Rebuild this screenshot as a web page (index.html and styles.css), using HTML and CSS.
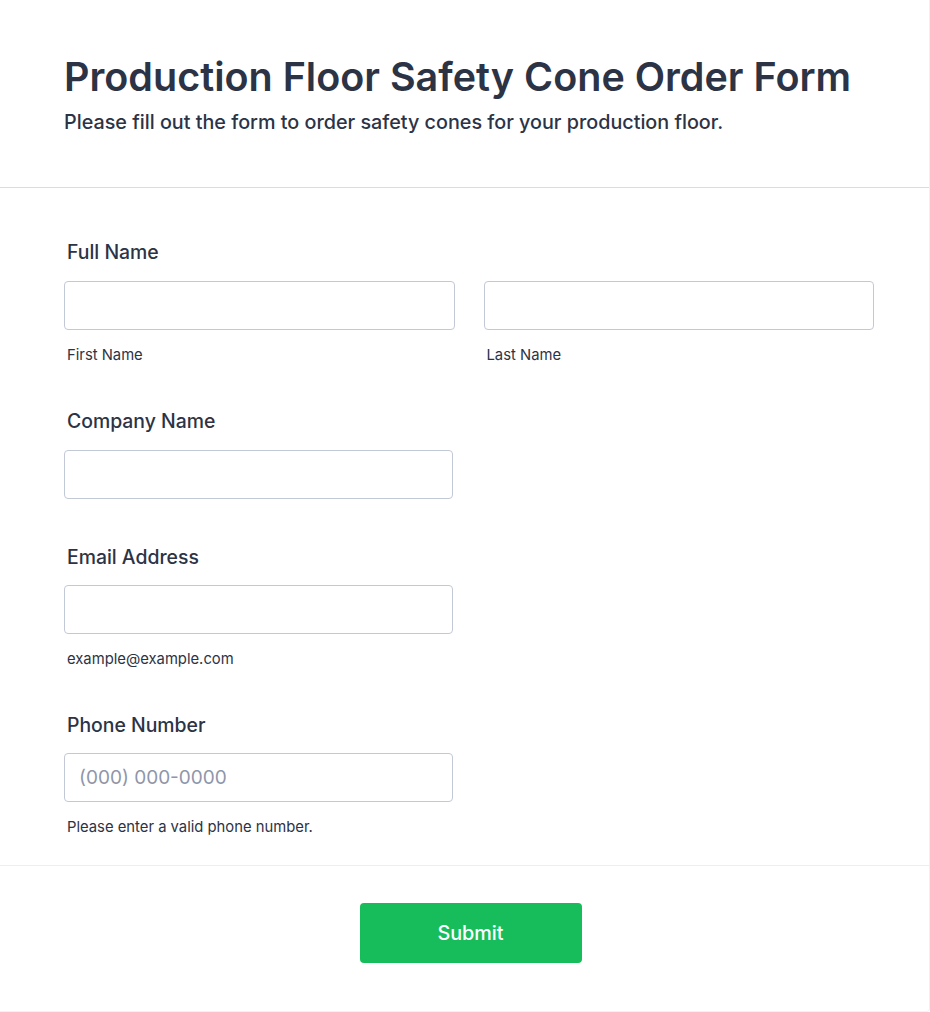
FILE: index.html
```html
<!DOCTYPE html>
<html lang="en">
<head>
<meta charset="utf-8">
<title>Production Floor Safety Cone Order Form</title>
<link rel="stylesheet" href="styles.css">
</head>
<body>
<div class="card">
  <header class="header">
    <h1 class="title">Production Floor Safety Cone Order Form</h1>
    <p class="subtitle">Please fill out the form to order safety cones for your production floor.</p>
  </header>
  <form class="body">
    <div class="field field-first">
      <label class="label">Full Name</label>
      <div class="row">
        <div class="col">
          <input class="input" type="text">
          <span class="sub">First Name</span>
        </div>
        <div class="col">
          <input class="input" type="text">
          <span class="sub">Last Name</span>
        </div>
      </div>
    </div>
    <div class="field field-noSub">
      <label class="label">Company Name</label>
      <input class="input input-single" type="text">
    </div>
    <div class="field">
      <label class="label">Email Address</label>
      <input class="input input-single" type="email">
      <span class="sub">example@example.com</span>
    </div>
    <div class="field">
      <label class="label">Phone Number</label>
      <input class="input input-single" type="tel" placeholder="(000) 000-0000">
      <span class="sub">Please enter a valid phone number.</span>
    </div>
  </form>
  <footer class="footer">
    <button class="submit" type="button">Submit</button>
  </footer>
</div>
</body>
</html>
```
FILE: styles.css
```css
* { box-sizing: border-box; }
html, body { margin: 0; padding: 0; background: #ffffff; }
body {
  font-family: Inter, "Noto Sans", sans-serif;
  color: #2c3345;
}
.card {
  width: 930px;
  height: 1012px;
  border-right: 1px solid #eef0f8;
  border-bottom: 1px solid #f1f2f8;
  border-radius: 0 0 4px 0;
  display: flex;
  flex-direction: column;
}
.header {
  padding: 53px 64px 51px;
  border-bottom: 1px solid #d9dbe6;
}
.title {
  margin: 0;
  font-size: 39.5px;
  line-height: 48px;
  font-weight: 600;
  color: #2c3345;
}
.subtitle {
  margin: 7px 0 0;
  font-size: 19.75px;
  line-height: 28px;
  font-weight: 500;
  color: #2c3345;
}
.body {
  padding: 52px 55px 29px 64px;
  display: flex;
  flex-direction: column;
  gap: 44.5px;
  border-bottom: 1px solid #eceef4;
}
.field-first { margin-bottom: 1px; }
.field-noSub + .field { margin-top: 1.5px; }
.field {
  display: flex;
  flex-direction: column;
}
.label {
  display: block;
  padding-left: 3px;
  font-size: 19.4px;
  line-height: 24px;
  font-weight: 500;
  margin-bottom: 16.5px;
}
.row {
  display: flex;
  gap: 29px;
}
.col {
  width: 392px;
  display: flex;
  flex-direction: column;
}
.input {
  display: block;
  width: 100%;
  height: 49px;
  border: 1px solid #c3c8d6;
  border-radius: 4px;
  padding: 0 14px;
  font-family: Inter, "Noto Sans", sans-serif;
  font-size: 19px;
  color: #2c3345;
  background: #fff;
  outline: none;
}
.input-single { width: 389px; }
.input::placeholder { color: #8f96ab; }
.sub {
  display: block;
  padding-left: 3px;
  margin-top: 16px;
  font-size: 14.8px;
  line-height: 18px;
  color: #2c3345;
}
.footer {
  display: flex;
  justify-content: center;
  padding: 37px 0 0 12px;
}
.submit {
  width: 222px;
  height: 60px;
  border: none;
  border-radius: 4px;
  background: #18bd5b;
  color: #ffffff;
  font-family: Inter, "Noto Sans", sans-serif;
  font-size: 19.8px;
  font-weight: 500;
  cursor: pointer;
}
```
